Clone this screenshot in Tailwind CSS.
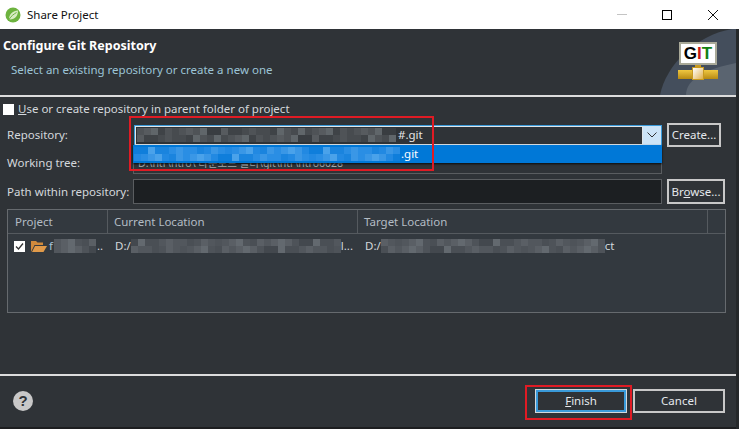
<!DOCTYPE html>
<html>
  <head>
    <title>Share Project</title>
    <script src="https://cdn.jsdelivr.net/npm/@tailwindcss/browser@4"></script>
  </head>
  <body>
    <div class="relative flex flex-col w-[739px] h-[429px] overflow-hidden bg-[#2f3337] text-[11.5px] leading-[16px] text-[#d4d8dc] whitespace-nowrap font-['Noto_Sans','Noto_Sans_CJK_KR',sans-serif]">
      <!-- title bar -->
      <div class="flex items-center h-[29px] shrink-0 bg-white text-[#111] pl-[5px]">
        <svg class="w-[16px] h-[16px]" viewBox="0 0 16 16">
          <circle cx="8" cy="8" r="7.5" fill="#6db33f" />
          <path d="M4 12C4 7 8 4 13 3.500C13 9 10 12.500 5 12.500Z" fill="#d8ecc4" />
          <path d="M4 12.500C6 9 9 7 11.500 5.500" stroke="#6db33f" fill="none" />
        </svg>
        <span class="ml-[6px]">Share Project</span>
        <div class="ml-auto flex items-center h-full">
          <div class="w-[10px] h-px bg-[#c4c4c4] mr-[35px]"></div>
          <div class="w-[10px] h-[10px] border border-black mr-[36px]"></div>
          <svg class="w-[10px] h-[10px] mr-[21px]" viewBox="0 0 10 10"><path d="M0 0L10 10M10 0L0 10" stroke="#111" /></svg>
        </div>
      </div>

      <!-- header -->
      <div class="relative flex flex-col h-[66px] shrink-0 pl-[3px] pt-[9px]">
        <div class="font-bold text-[12.500px] text-white leading-[16px]">Configure Git Repository</div>
        <div class="ml-[8px] mt-[8px] text-[#9cc4d6]">Select an existing repository or create a new one</div>
        <svg class="absolute right-[3px] top-0 w-[80px] h-[66px]" viewBox="0 0 80 66">
          <path d="M4 66C10 36 40 6 76 0L80 0V66Z" fill="#444e5c" />
          <path d="M30 66C30 50 50 40 80 34V66Z" fill="#5a6470" />
        </svg>
        <div class="absolute left-[678px] top-[13px] flex flex-col items-center w-[40px]">
          <div class="flex justify-center w-[38px] h-[23px] bg-white border-2 border-[#a9a998] font-['Liberation_Sans',sans-serif] font-bold text-[17px] leading-[19px]">
            <span class="text-black">G</span><span class="text-[#c81818]">I</span><span class="text-[#108010]">T</span>
          </div>
          <div class="w-[6px] h-[3px] bg-[#c89a20]"></div>
          <div class="relative w-[40px] h-[9px] bg-gradient-to-b from-[#f0c840] to-[#b88a10] mt-[2px]">
            <div class="absolute left-[14px] top-[-3px] w-[12px] h-[13px] bg-gradient-to-br from-white to-[#e0b040] border border-[#c89a20]"></div>
          </div>
        </div>
      </div>
      <div class="h-[2px] shrink-0 bg-[#dcdcdc]"></div>

      <!-- form -->
      <div class="flex flex-col h-[277px] shrink-0">
        <div class="flex items-center mt-[4px] ml-[3px] h-[16px]">
          <div class="w-[11px] h-[11px] bg-white"></div>
          <span class="ml-[4px]"><span class="underline">U</span>se or create repository in parent folder of project</span>
        </div>

        <div class="flex items-center mt-[6px] h-[24px] pl-[7px]">
          <span class="w-[127px] shrink-0">Repository:</span>
          <div class="relative flex w-[528px] h-[21px] border border-[#3a9ad9] bg-[#2f3337]">
            <div class="flex flex-1 items-center border border-[#dfe6ea] pl-[1px]">
              <div class="flex flex-col" data-mosaic="gray" data-cols="37"></div>
              <span class="ml-[2px] text-[#e6e6e6]">#.git</span>
            </div>
            <div class="flex items-center justify-center w-[18px] bg-[#cce4f7]">
              <svg class="w-[10px] h-[6px]" viewBox="0 0 10 6"><path d="M0.500 0.500L5 5L9.500 0.500" stroke="#333" fill="none" /></svg>
            </div>
          </div>
          <button class="ml-[5px] w-[54px] h-[24px] border-2 border-[#c8c8c8] text-[#e4e8ec]">Create...</button>
        </div>

        <div class="flex h-[32px] pl-[7px]">
          <span class="w-[126px] shrink-0 pt-[8px]">Working tree:</span>
          <div class="w-[529px] h-[27px] border border-[#5a5d60] border-t-0 pl-[4px] pt-[10px] text-[#a4a8ac] text-[10.500px] leading-[12px] overflow-hidden">
            <span>D:\ntr\ntro\ 다운로드 폴더\git\ntr\ntro6028</span>
          </div>
        </div>

        <div class="flex items-center h-[25px] pl-[7px]">
          <span class="w-[126px] shrink-0">Path within repository:</span>
          <div class="w-[529px] h-[25px] border border-[#5a5d60] bg-[#1c1f22]"></div>
          <button class="ml-[5px] w-[58px] h-[25px] border-2 border-[#c8c8c8] text-[#e4e8ec]">Br<span class="underline">o</span>wse...</button>
        </div>

        <!-- table -->
        <div class="flex flex-col ml-[7px] mt-[5px] w-[719px] h-[104px] border border-[#666a6e] bg-[#33393f]">
          <div class="flex h-[24px] shrink-0 border-b border-[#555a5f] text-[#b4bcc4]">
            <div class="flex items-center w-[100px] pl-[7px] border-r border-[#555a5f]">Project</div>
            <div class="flex items-center w-[250px] pl-[6px] border-r border-[#555a5f]">Current Location</div>
            <div class="flex items-center w-[350px] pl-[6px] border-r border-[#555a5f]">Target Location</div>
          </div>
          <div class="flex h-[24px] items-center">
            <div class="flex items-center w-[100px] pl-[6px]">
              <div class="flex items-center justify-center w-[11px] h-[11px] bg-white">
                <svg class="w-[9px] h-[9px]" viewBox="0 0 9 9"><path d="M1 4.500L3.500 7L8 1.500" stroke="#333" stroke-width="1.300" fill="none" /></svg>
              </div>
              <svg class="ml-[6px] w-[16px] h-[12px]" viewBox="0 0 16 12">
                <path d="M0 12V1H5L6.500 2.500H12V5H3.500L0 12Z" fill="#d08a3c" />
                <path d="M1 12L4 6H16L12.500 12Z" fill="#e09a4a" />
              </svg>
              <span class="ml-[2px] text-[#a8c4d8]">f</span>
              <div class="flex flex-col ml-[1px]" data-mosaic="table" data-cols="6"></div>
              <span class="ml-[1px]">..</span>
            </div>
            <div class="flex items-center w-[250px] pl-[7px]">
              <span>D:/</span>
              <div class="flex flex-col" data-mosaic="table" data-cols="30"></div>
              <span>l...</span>
            </div>
            <div class="flex items-center pl-[7px]">
              <span>D:/</span>
              <div class="flex flex-col" data-mosaic="table" data-cols="32"></div>
              <span>ct</span>
            </div>
          </div>
        </div>
      </div>

      <div class="h-[2px] shrink-0 mb-[13px] bg-[#dcdcdc]"></div>

      <!-- footer -->
      <div class="flex items-center h-[24px] shrink-0 pl-[13px] pr-[14px]">
        <svg class="w-[20px] h-[20px] mb-[1px]" viewBox="0 0 20 20">
          <circle cx="10" cy="10" r="10" fill="#c8c8c8" />
          <text x="10" y="15" text-anchor="middle" font-family="Liberation Sans" font-weight="700" font-size="15" fill="#2f3337">?</text>
        </svg>
        <button class="ml-auto w-[90px] h-[22px] border-2 border-[#3a9ad9] outline outline-1 outline-[#d0d8dc] text-[#e4e8ec]"><span class="underline">F</span>inish</button>
        <button class="ml-[7px] w-[92px] h-[24px] border-2 border-[#c8c8c8] text-[#e4e8ec]">Cancel</button>
      </div>
      <div class="mt-auto h-[2px] shrink-0 bg-[#1d1e20]"></div>

      <!-- right window edge -->
      <div class="absolute right-0 top-[29px] bottom-0 w-[3px] bg-[#25282a]"></div>

      <!-- open combo list -->
      <div class="absolute left-[133px] top-[145px] flex items-center w-[529px] h-[18px] pl-[1px] bg-[#0078d7] text-white shadow-[0_1px_2px_rgba(0,0,0,0.8)]">
        <div class="flex flex-col" data-mosaic="blue" data-cols="38"></div>
        <span class="ml-[1px]">.git</span>
      </div>

      <!-- red annotations -->
      <div class="absolute left-[129px] top-[116px] w-[305px] h-[55px] border-2 border-[#e01b24]"></div>
      <div class="absolute left-[525px] top-[385px] w-[107px] h-[35px] border-2 border-[#e01b24]"></div>
    </div>

    <script type="text/javascript">
      // the blurred-out paths in the screenshot, drawn as mosaic cells
      const palettes = {
        gray: ["#3f4347", "#474b4f", "#4f5357", "#575b5f", "#60666a", "#393d41"],
        blue: ["#1a84de", "#2a8ee4", "#3a97e6", "#4aa2ea", "#2289e2", "#0f7edb"],
        table: ["#4a4f55", "#52575d", "#5a5f65", "#63696f", "#4e5359", "#43484e"],
      };

      let seed = 7;
      const nextIndex = (size) => {
        seed = (seed * 31 + 11) % 101;
        return seed % size;
      };

      document.querySelectorAll("[data-mosaic]").forEach((el) => {
        const colors = palettes[el.dataset.mosaic];
        const cols = Number(el.dataset.cols);
        for (let row = 0; row < 2; row++) {
          const rowEl = document.createElement("div");
          rowEl.className = "flex h-[7px]";
          for (let col = 0; col < cols; col++) {
            const cell = document.createElement("div");
            cell.className = "w-[7px] h-[7px]";
            cell.style.backgroundColor = colors[nextIndex(colors.length)];
            rowEl.appendChild(cell);
          }
          el.appendChild(rowEl);
        }
      });
    </script>
  </body>
</html>
